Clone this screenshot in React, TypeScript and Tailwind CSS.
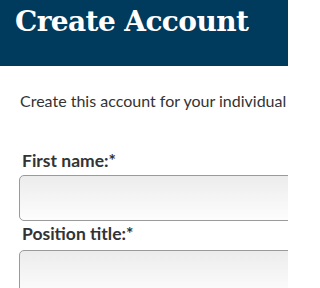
export default function App() {
  return (
    <div className="w-[288px] h-[288px] overflow-hidden bg-white">
      <div className="h-[66px] bg-[#003a5c] pl-[15px] pt-[2px]">
        <h1 className="text-[28px] leading-[40px] font-bold text-white whitespace-nowrap tracking-[-0.6px]" style={{ fontFamily: '"DejaVu Serif", serif' }}>
          Create Account
        </h1>
      </div>
      <div className="pl-[20px]" style={{ fontFamily: 'Lato, sans-serif' }}>
        <p className="mt-[23px] text-[16px] leading-[24px] text-[#333] whitespace-nowrap">
          Create this account for your individual
        </p>
        <div className="mt-[37px] pl-[2px]">
          <label className="block text-[17.5px] leading-[22px] font-bold text-[#333]">First name:*</label>
        </div>
        <div className="mt-[3px] h-[46px] w-[300px] -ml-px rounded-[5px] border border-[#9a9a9a] bg-gradient-to-b from-[#ececec] to-[#fdfdfd]" />
        <div className="mt-[2px] pl-[2px]">
          <label className="block text-[17.5px] leading-[22px] font-bold text-[#333]">Position title:*</label>
        </div>
        <div className="mt-[5px] h-[46px] w-[300px] -ml-px rounded-[5px] border border-[#9a9a9a] bg-gradient-to-b from-[#ececec] to-[#fdfdfd]" />
      </div>
    </div>
  );
}
